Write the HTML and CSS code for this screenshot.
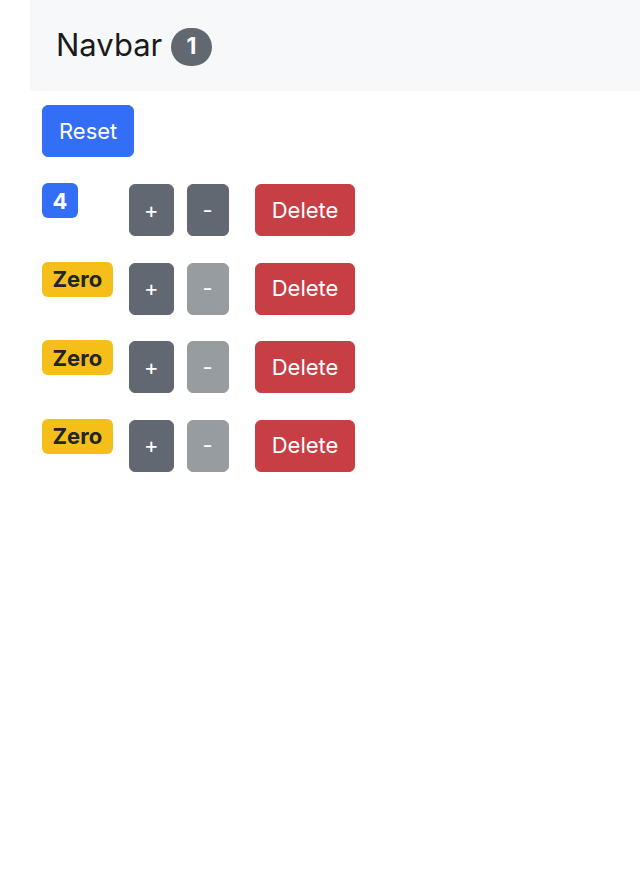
FILE: index.html
```html
<!DOCTYPE html>
<html lang="en">
<head>
<meta charset="utf-8">
<title>Counters</title>
<link rel="stylesheet" href="styles.css">
</head>
<body>
<nav class="navbar">
  <span class="brand">Navbar <span class="pill">1</span></span>
</nav>
<main class="main">
  <button class="btn btn-primary">Reset</button>
  <div class="counters">
    <div class="counter">
      <div class="count-col"><span class="count count-primary">4</span></div>
      <button class="btn btn-secondary btn-sq">+</button>
      <button class="btn btn-secondary btn-sq btn-minus">-</button>
      <button class="btn btn-danger btn-delete">Delete</button>
    </div>
    <div class="counter">
      <div class="count-col"><span class="count count-warning">Zero</span></div>
      <button class="btn btn-secondary btn-sq">+</button>
      <button class="btn btn-secondary btn-sq btn-minus" disabled>-</button>
      <button class="btn btn-danger btn-delete">Delete</button>
    </div>
    <div class="counter">
      <div class="count-col"><span class="count count-warning">Zero</span></div>
      <button class="btn btn-secondary btn-sq">+</button>
      <button class="btn btn-secondary btn-sq btn-minus" disabled>-</button>
      <button class="btn btn-danger btn-delete">Delete</button>
    </div>
    <div class="counter">
      <div class="count-col"><span class="count count-warning">Zero</span></div>
      <button class="btn btn-secondary btn-sq">+</button>
      <button class="btn btn-secondary btn-sq btn-minus" disabled>-</button>
      <button class="btn btn-danger btn-delete">Delete</button>
    </div>
  </div>
</main>
</body>
</html>
```
FILE: styles.css
```css
* { box-sizing: border-box; }
body {
  margin: 0;
  font-family: Inter, "Noto Sans", sans-serif;
  font-size: 22px;
  color: #212529;
  background: #fff;
}
.navbar {
  margin-left: 30px;
  height: 91px;
  background: #f7f8f9;
  display: flex;
  align-items: center;
  padding-left: 26px;
}
.brand {
  font-size: 31px;
  line-height: 1.5;
  color: #1a1a1a;
}
.pill {
  display: inline-block;
  font-size: 23px;
  font-weight: 700;
  line-height: 1;
  padding: 7.5px 15.5px;
  border-radius: 50rem;
  background: #626870;
  color: #fff;
  vertical-align: 2px;
}
.main {
  padding: 14px 0 0 42px;
}
.btn {
  font-family: inherit;
  font-size: 22px;
  line-height: 33px;
  padding: 8.5px 16px;
  border: 1px solid transparent;
  border-radius: 6px;
  color: #fff;
  cursor: pointer;
}
.btn-primary { background: #336ff6; border-color: #336ff6; }
.btn-secondary { background: #626871; border-color: #626871; }
.btn-secondary:disabled { background: #979ca1; border-color: #979ca1; }
.btn-danger { background: #c73f45; border-color: #c73f45; }
.btn-sq { padding-left: 14px; padding-right: 14px; }
.btn-minus { margin-left: 13px; padding-left: 15px; padding-right: 15px; }
.btn-delete { margin-left: 26px; }
.counters {
  display: flex;
  flex-direction: column;
  gap: 26.5px;
  margin-top: 27px;
}
.counter {
  display: flex;
  align-items: flex-start;
}
.count-col {
  width: 87px;
  flex: none;
}
.count {
  display: inline-block;
  font-size: 22px;
  font-weight: 700;
  line-height: 1;
  padding: 6.5px 10.5px;
  border-radius: 6px;
  margin-top: -1px;
}
.count-primary { background: #336ff6; color: #fff; }
.count-warning { background: #f5be18; color: #212529; }
```
